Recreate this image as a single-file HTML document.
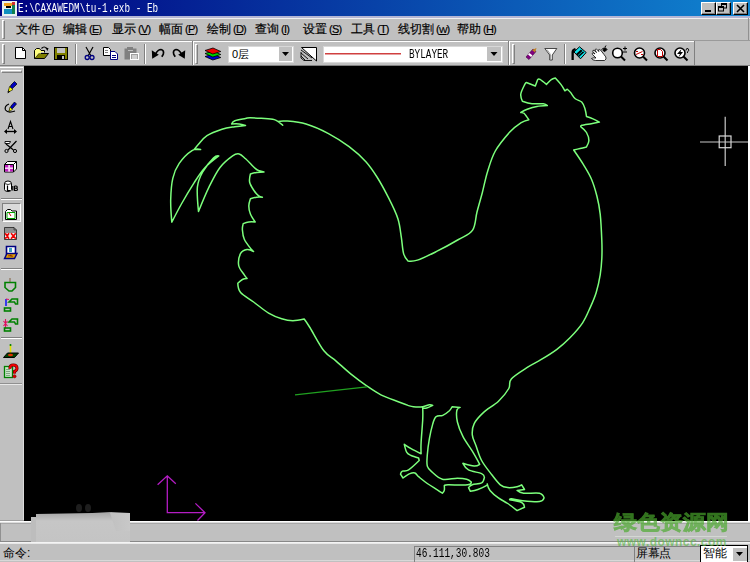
<!DOCTYPE html>
<html><head><meta charset="utf-8">
<style>
*{margin:0;padding:0;box-sizing:border-box}
html,body{width:750px;height:562px;overflow:hidden;background:#c0c0c0;font-family:"Liberation Sans",sans-serif;font-size:12px;color:#000}
.a{position:absolute}
#title{left:0;top:0;width:750px;height:16px;background:linear-gradient(to right,#000080,#1084d0)}
#ttext{left:18px;top:3px;color:#fff;font-family:"Liberation Mono",monospace;font-size:12.5px;font-weight:normal;white-space:nowrap;line-height:13px;transform:scaleX(0.747);transform-origin:0 0}
.tb{background:#c0c0c0;border-top:1px solid #fff;border-left:1px solid #fff;border-right:1px solid #000;border-bottom:1px solid #000;box-shadow:inset -1px -1px 0 #808080}
.mi{top:22px;font-size:12px;white-space:nowrap;line-height:14px;-webkit-text-stroke:0.2px #000}
.hl{width:3px;border-left:1px solid #fff;border-right:1px solid #808080;border-top:1px solid #fff;border-bottom:1px solid #808080}
.hh{height:3px;border-left:1px solid #fff;border-right:1px solid #808080;border-top:1px solid #fff;border-bottom:1px solid #808080}
.sep{width:2px;border-left:1px solid #808080;border-right:1px solid #fff}
.hsep{height:2px;border-top:1px solid #808080;border-bottom:1px solid #fff}
.ic{position:absolute}
.k{font-size:11px;letter-spacing:-0.8px;margin-left:2px}
.k u{text-decoration-thickness:1px;text-underline-offset:1px}
#canvas{left:24px;top:66px;width:724px;height:455px;background:#000}
</style></head><body>
<div class="a" id="title"></div>
<svg class="a" style="left:2px;top:1px" width="15" height="15" viewBox="0 0 15 15">
<rect x="0" y="0" width="15" height="15" fill="#e8f0f0"/>
<rect x="2" y="2" width="8" height="3" fill="#f0a020"/>
<rect x="10" y="1" width="3" height="3" fill="#d03030"/>
<rect x="10" y="4" width="3" height="9" fill="#108050"/>
<rect x="4" y="5" width="5" height="2" fill="#000"/>
<rect x="2" y="8" width="8" height="5" fill="#1090c0"/>
</svg>
<div class="a" id="ttext">E:\CAXAWEDM\tu-1.exb - Eb</div>
<div class="a tb" style="left:701px;top:2px;width:15px;height:13px"></div>
<div class="a tb" style="left:716px;top:2px;width:15px;height:13px"></div>
<div class="a tb" style="left:733px;top:2px;width:15px;height:13px"></div>
<svg class="a" style="left:701px;top:2px" width="47" height="13">
<rect x="4" y="8" width="6" height="2" fill="#000"/>
<path d="M20.5 5.5 H25.5 V7 M20.5 4.5 H23" fill="none" stroke="none"/>
<rect x="20.5" y="1.5" width="5" height="4.5" fill="none" stroke="#000" stroke-width="1"/>
<rect x="20" y="1" width="6" height="2" fill="#000"/>
<rect x="17.5" y="4.5" width="5" height="4.5" fill="#c0c0c0" stroke="#000" stroke-width="1"/>
<rect x="17" y="4" width="6" height="2" fill="#000"/>
<rect x="21" y="1" width="0" height="0"/>
<path d="M36 3 L43 10 M43 3 L36 10" stroke="#000" stroke-width="1.6"/>
</svg>

<!-- menu bar -->
<div class="a" style="left:0;top:16px;width:750px;height:2px;background:#b4b6d4"></div>
<div class="a" style="left:0;top:18px;width:750px;height:1px;background:#f0f0f0"></div>
<div class="a" style="left:0;top:40px;width:750px;height:1px;background:#9a9a9a"></div>
<div class="a" style="left:748px;top:18px;width:1px;height:22px;background:#909090"></div>
<div class="a hl" style="left:2px;top:20px;height:19px"></div>
<div class="a mi" style="left:16px">文件<span class="k">(<u>F</u>)</span></div>
<div class="a mi" style="left:63px">编辑<span class="k">(<u>E</u>)</span></div>
<div class="a mi" style="left:112px">显示<span class="k">(<u>V</u>)</span></div>
<div class="a mi" style="left:159px">幅面<span class="k">(<u>P</u>)</span></div>
<div class="a mi" style="left:207px">绘制<span class="k">(<u>D</u>)</span></div>
<div class="a mi" style="left:255px">查询<span class="k">(<u>I</u>)</span></div>
<div class="a mi" style="left:303px">设置<span class="k">(<u>S</u>)</span></div>
<div class="a mi" style="left:351px">工具<span class="k">(<u>T</u>)</span></div>
<div class="a mi" style="left:398px">线切割<span class="k">(<u style="font-size:9px">W</u>)</span></div>
<div class="a mi" style="left:457px">帮助<span class="k">(<u>H</u>)</span></div>


<!-- toolbar row -->
<div class="a" style="left:0;top:41px;width:695px;height:1px;background:#fff"></div>
<div class="a" style="left:0;top:65px;width:750px;height:1px;background:#808080"></div>
<div class="a" style="left:748px;top:66px;width:2px;height:455px;background:#fff"></div>
<div class="a" style="left:192px;top:41px;width:1px;height:24px;background:#808080"></div>
<div class="a" style="left:193px;top:41px;width:1px;height:24px;background:#fff"></div>
<div class="a" style="left:508px;top:41px;width:1px;height:24px;background:#808080"></div>
<div class="a" style="left:509px;top:41px;width:1px;height:24px;background:#fff"></div>
<div class="a" style="left:694px;top:41px;width:1px;height:24px;background:#808080"></div>
<div class="a hl" style="left:2px;top:44px;height:20px"></div>
<div class="a hl" style="left:195px;top:44px;height:20px"></div>
<div class="a hl" style="left:512px;top:44px;height:20px"></div>
<div class="a sep" style="left:75px;top:44px;height:20px"></div>
<div class="a sep" style="left:144px;top:44px;height:20px"></div>
<div class="a sep" style="left:564px;top:44px;height:20px"></div>

<svg class="a" style="left:0;top:41px" width="750" height="24" viewBox="0 41 750 24">
<!-- new -->
<path d="M15.5 47.5 H22.5 L25.5 50.5 V58.5 H15.5 Z" fill="#fff" stroke="#000"/>
<path d="M22.5 47.5 V50.5 H25.5" fill="none" stroke="#000"/>
<!-- open -->
<path d="M34.5 50.5 L36.5 48.5 H39.5 L41 50.5 H44.5 V52.5" fill="#ffff80" stroke="#000"/>
<path d="M34.5 50.5 V58.5 H44.5 L48.5 53.5 H38.5 L34.5 58.5" fill="#808000" stroke="#000"/>
<path d="M34.5 50.5 H41 V53.5 H38.5 L34.5 58.5Z" fill="#ffff80" stroke="none"/>
<path d="M34.5 50.5 V58.5" stroke="#000"/>
<path d="M41.5 48.5 Q44 45.5 47 48.5" fill="none" stroke="#000" stroke-width="1.2"/>
<path d="M45.5 48 L48.5 48 L47.5 51 Z" fill="#000"/>
<!-- save -->
<rect x="54.5" y="47.5" width="13" height="12" fill="#808000" stroke="#000"/>
<rect x="57" y="48" width="8" height="5" fill="#c0c0c0"/>
<rect x="57" y="55" width="8" height="4.5" fill="#000"/>
<rect x="62" y="56" width="2" height="3" fill="#c0c0c0"/>
<!-- cut -->
<path d="M86 47 L91 56 M93 47 L88 56" stroke="#000" stroke-width="1.2"/>
<circle cx="87.2" cy="57.5" r="2" fill="none" stroke="#000080" stroke-width="1.3"/>
<circle cx="92" cy="57.5" r="2" fill="none" stroke="#000080" stroke-width="1.3"/>
<!-- copy -->
<path d="M103.5 47.5 H108.5 L110.5 49.5 V55.5 H103.5Z" fill="#fff" stroke="#000"/>
<path d="M105 50.5 H108 M105 52.5 H108" stroke="#808080"/>
<path d="M110.5 51.5 H115 L117.5 54 V59.5 H110.5Z" fill="#fff" stroke="#000080"/>
<path d="M112 55.5 H116 M112 57.5 H116" stroke="#000080"/>
<!-- paste (disabled) -->
<rect x="124.5" y="48.5" width="12" height="11" fill="#808080"/>
<rect x="127" y="47" width="6" height="3" fill="#808080"/>
<rect x="128" y="50" width="5" height="1" fill="#c0c0c0"/>
<rect x="130.5" y="53.5" width="8" height="6" fill="#a0a0a0" stroke="#fff"/>
<path d="M132 56 H137 M132 58 H137" stroke="#fff"/>
<!-- undo -->
<path d="M155.5 54 Q158 49.5 161 49.5 Q164.5 50.3 163.2 54.5 L161.8 56.8" fill="none" stroke="#000" stroke-width="1.7"/>
<path d="M151.8 50.2 L152.2 58.8 L158.8 54.8 Z" fill="#000"/>
<!-- redo -->
<path d="M181.5 54 Q179 49.5 176 49.5 Q172.5 50.3 173.8 54.5 L175.2 56.8" fill="none" stroke="#000" stroke-width="1.7"/>
<path d="M185.2 50.2 L184.8 58.8 L178.2 54.8 Z" fill="#000"/>
<!-- layers -->
<path d="M205 56.5 L213 54 L220.8 57.5 L212.8 60 Z" fill="#0000d0" stroke="#000" stroke-width=".8"/>
<path d="M205 53.5 L213 51 L220.8 54.5 L212.8 57 Z" fill="#00d000" stroke="#000" stroke-width=".8"/>
<path d="M205 50.5 L213 48 L220.8 51.5 L212.8 54 Z" fill="#f00000" stroke="#000" stroke-width=".8"/>
<!-- layer combo -->
<rect x="228.5" y="46.5" width="65" height="16" fill="#fff" stroke="#d8d8d8"/>
<rect x="279" y="47" width="13" height="14" fill="#c0c0c0"/>
<path d="M282 52 H289 L285.5 56 Z" fill="#000"/>
<!-- line type icon -->
<path d="M301.5 47.5 H316.5 V61 Z" fill="#fff" stroke="#000"/>
<path d="M301 50 L312 58 M301 53 L308 59 M301 56 L305 60 M301 52 V58 L304 60.5 H312" fill="none" stroke="#000" stroke-width=".9"/>
<!-- color combo -->
<rect x="323.5" y="46.5" width="179" height="16" fill="#fff" stroke="#d8d8d8"/>
<rect x="325" y="53" width="76" height="1.5" fill="#d04040"/>
<rect x="487" y="47" width="14" height="14" fill="#c0c0c0"/>
<path d="M490.5 52 H497.5 L494 56 Z" fill="#000"/>
<!-- pencil eraser -->
<path d="M526 57 L533 49 L536 51.5 L529 59.5 Z" fill="#800080" stroke="#400040" stroke-width=".6"/>
<path d="M529.5 53 L532.5 55.5 L531 57 L528 54.5 Z" fill="#fff"/>
<path d="M532 50 L535 52.5 L536.5 48 Z" fill="#c08020"/>
<!-- funnel -->
<path d="M544.8 48.5 H556.8 L552.3 55 V60 H549.7 V55 Z" fill="#fff" stroke="#202020" stroke-width=".8"/>
<path d="M547 49.5 L550.5 54.5 V59.5" fill="none" stroke="#909090" stroke-width=".8"/>
<!-- fill -->
<path d="M571.5 60 V52 Q571.5 49 575 48 L576 49.5 Q573.8 50.5 573.8 53 V60 Z" fill="#000"/>
<path d="M574 52 L579.5 46.8 L586.2 52.5 L580.5 58.8 Z" fill="#10e0e8" stroke="#000" stroke-width="1"/>
<path d="M576 54 L581 49.5 L584.2 52.3 L579 57 Z" fill="#000"/>
<path d="M578 55.5 L583 51" stroke="#10e0e8" stroke-width="0.8"/>
<!-- hand -->
<path d="M595.5 60.5 Q592 60 591.5 58.5 Q593 57.5 596 58 L592.5 54.5 Q591.5 53 593 52.8 L595 54 L592.8 51.5 Q592.5 50 594 50.3 L596.5 52.5 L595 50 Q595 48.8 596.5 49.2 L599 51.5 L598.5 49.8 Q599.5 49 600.5 50 L604 54.5 Q606.5 57 606 59 L604.5 60.5 Z" fill="#fff" stroke="#000" stroke-width=".8"/>
<path d="M603 50.5 L605 47.5 L607 49.5 L605 51.5Z M601.5 49.5 L604 48 M606 45.5 L605 47" fill="#000" stroke="#000" stroke-width="1"/>
<!-- zoom + -->
<circle cx="617.5" cy="53" r="4.8" fill="#fff" stroke="#000" stroke-width="1.6"/>
<path d="M621 56.5 L625 60.5" stroke="#000" stroke-width="2"/>
<path d="M623 48.5 H627 M625 46.5 V50.5 M623 52 H627" stroke="#000" stroke-width="1"/>
<!-- zoom window -->
<circle cx="639.5" cy="53" r="5" fill="#fff" stroke="#000" stroke-width="1.6"/>
<path d="M643 56.5 L647 60.5" stroke="#000" stroke-width="2"/>
<path d="M636 54.5 L642.5 51.5 M636 51.5 H638 M641 54.5 H643" stroke="#c00000" stroke-width="1"/>
<!-- zoom page -->
<circle cx="660" cy="53" r="5" fill="#fff" stroke="#000" stroke-width="1.6"/>
<path d="M663.5 56.5 L667.5 60.5" stroke="#000" stroke-width="2"/>
<path d="M657.5 49.5 H660.5 L662.5 51.5 V56.5 H657.5Z" fill="#fff" stroke="#c00000" stroke-width="1"/>
<!-- zoom dyn -->
<circle cx="680" cy="53" r="5" fill="#fff" stroke="#000" stroke-width="1.6"/>
<path d="M683.5 56.5 L687.5 60.5" stroke="#000" stroke-width="2"/>
<path d="M681.5 49 L677 54 H680 L678 58 L683 52 H680.5Z" fill="#000"/>
<path d="M686 50.5 Q686 48 688 48.5 Q690 50 687.5 52 V53" fill="none" stroke="#000" stroke-width=".9"/>
</svg>
<div class="a" style="left:232px;top:47px;font-size:11px;line-height:14px;letter-spacing:-0.5px">0层</div>
<div class="a" style="left:409px;top:47.5px;font-family:'Liberation Mono',monospace;font-size:12.5px;line-height:15px;white-space:nowrap;transform:scaleX(0.747);transform-origin:0 0">BYLAYER</div>


<div class="a" id="canvas"></div>
<svg class="a" style="left:0;top:0" width="750" height="562" viewBox="0 0 750 562">
<path id="rooster" d="M171.8 222.2 C171.8 222.2 170.5 207.0 170.7 199.7 C170.9 192.4 171.4 184.4 172.8 178.4 C174.2 172.4 176.0 168.0 179.2 163.4 C182.4 158.8 188.4 152.9 192.0 150.6 C195.6 148.3 200.6 149.5 200.6 149.5 C200.6 149.5 194.2 149.5 194.2 149.5 C194.2 149.5 196.4 146.5 198.5 144.2 C200.6 141.9 203.1 138.1 207.0 135.6 C210.9 133.1 217.4 130.7 222.0 129.2 C226.6 127.7 230.9 127.3 234.8 126.7 C238.7 126.1 245.5 125.4 245.5 125.4 C245.5 125.4 241.4 124.2 239.1 123.9 C236.8 123.7 231.6 123.9 231.6 123.9 C231.6 123.9 232.5 121.6 234.8 120.7 C237.1 119.8 243.0 119.0 245.5 118.5 C248.0 118.0 247.4 117.8 250.0 117.8 C252.6 117.8 257.1 118.0 261.2 118.3 C265.2 118.6 270.7 118.4 274.3 119.6 C277.9 120.8 282.7 125.2 282.7 125.2 C282.7 125.2 278.0 121.5 278.0 121.5 C278.0 121.5 281.3 120.6 286.0 121.0 C290.7 121.4 298.9 121.9 306.0 124.0 C313.1 126.1 321.3 129.8 328.5 133.6 C335.7 137.4 342.9 142.0 349.1 146.7 C355.3 151.4 361.2 156.6 365.9 161.7 C370.5 166.8 373.2 171.0 377.0 177.0 C380.8 183.0 385.1 191.0 388.6 197.9 C392.1 204.8 395.8 212.1 397.9 218.7 C400.0 225.2 400.4 231.4 401.3 237.2 C402.2 243.0 402.5 249.6 403.6 253.6 C404.7 257.6 408.0 261.0 408.0 261.0 C408.0 261.0 412.7 261.7 417.4 260.1 C422.1 258.6 429.2 255.1 436.1 251.7 C443.0 248.3 452.4 243.1 458.5 239.5 C464.6 235.9 469.5 234.7 472.6 230.1 C475.7 225.5 475.4 218.2 477.0 212.0 C478.6 205.8 480.5 199.5 482.3 192.7 C484.1 185.9 485.4 178.3 487.6 171.4 C489.8 164.5 491.6 157.6 495.3 151.0 C499.0 144.4 505.6 136.7 509.8 132.0 C514.0 127.3 517.6 125.0 520.8 122.9 C524.0 120.9 528.8 119.7 528.8 119.7 C528.8 119.7 525.3 114.5 524.0 113.3 C522.7 112.1 520.8 112.5 520.8 112.5 C520.8 112.5 524.5 110.3 527.2 109.3 C529.9 108.3 533.5 107.1 536.9 106.5 C540.2 105.9 547.3 105.6 547.3 105.6 C547.3 105.6 545.8 104.0 543.3 103.7 C540.8 103.4 535.5 104.1 532.0 103.7 C528.5 103.3 522.4 101.2 522.4 101.2 C522.4 101.2 520.4 96.8 520.8 94.0 C521.2 91.2 523.9 86.3 524.8 84.4 C525.7 82.5 526.4 82.5 526.4 82.5 C526.4 82.5 535.3 86.0 535.3 86.0 C535.3 86.0 537.7 79.6 537.7 79.6 C537.7 79.6 538.5 78.5 540.0 79.3 C541.5 80.1 546.5 84.4 546.5 84.4 C546.5 84.4 547.2 83.6 548.0 82.8 C548.8 82.0 550.1 80.4 551.3 79.6 C552.5 78.8 555.3 78.0 555.3 78.0 C555.3 78.0 559.3 82.3 560.9 84.4 C562.5 86.5 564.9 90.8 564.9 90.8 C564.9 90.8 567.3 89.2 567.3 89.2 C567.3 89.2 569.2 90.8 570.5 92.4 C571.8 94.0 573.4 97.2 575.3 98.8 C577.2 100.4 580.1 100.4 581.7 102.0 C583.3 103.6 584.1 106.1 584.9 108.5 C585.7 110.9 586.5 116.5 586.5 116.5 C586.5 116.5 590.9 118.0 593.0 118.9 C595.1 119.8 599.4 122.1 599.4 122.1 C599.4 122.1 594.2 123.2 591.3 123.7 C588.3 124.2 583.4 124.8 581.7 125.3 C580.0 125.8 580.9 126.9 580.9 126.9 C580.9 126.9 585.2 130.2 586.5 132.5 C587.8 134.8 588.9 138.1 588.9 140.5 C588.9 142.9 586.5 146.9 586.5 146.9 C586.5 146.9 582.2 148.0 580.1 148.5 C578.0 149.0 573.7 150.0 573.7 150.0 C573.7 150.0 580.4 159.6 583.3 164.4 C586.2 169.2 589.0 173.5 591.3 178.8 C593.6 184.2 595.5 190.6 597.0 196.5 C598.5 202.4 599.4 206.8 600.2 214.1 C601.0 221.3 601.5 232.6 601.8 240.0 C602.1 247.4 602.1 253.0 601.8 258.8 C601.5 264.6 601.1 269.3 600.2 274.9 C599.3 280.5 597.8 287.2 596.2 292.5 C594.6 297.8 592.8 301.8 590.5 306.9 C588.2 311.9 586.1 317.6 582.6 322.8 C579.1 328.0 574.0 333.6 569.7 338.0 C565.4 342.4 561.7 345.7 556.9 349.3 C552.1 352.9 545.7 356.8 540.9 359.7 C536.1 362.6 533.0 363.7 528.1 366.9 C523.2 370.1 514.5 375.3 511.3 378.9 C508.1 382.5 510.9 384.8 508.8 388.5 C506.7 392.2 502.7 397.2 498.5 401.2 C494.3 405.2 487.7 408.7 483.6 412.4 C479.6 416.1 476.1 419.9 474.2 423.6 C472.3 427.4 472.0 431.1 472.3 434.9 C472.6 438.6 474.6 441.8 476.1 446.1 C477.7 450.4 479.1 455.9 481.6 460.5 C484.1 465.1 487.8 469.6 490.9 473.6 C494.0 477.7 497.5 482.5 500.3 484.8 C503.1 487.1 504.9 487.3 507.7 487.6 C510.5 487.9 514.8 487.2 517.1 486.7 C519.4 486.2 521.7 484.8 521.7 484.8 C521.7 484.8 524.5 489.5 524.5 489.5 C524.5 489.5 517.1 490.4 517.1 490.4 C517.1 490.4 519.9 492.7 523.6 493.2 C527.3 493.7 536.1 492.4 539.5 493.2 C542.9 494.0 544.1 497.9 544.1 497.9 C544.1 497.9 543.1 501.1 539.5 501.6 C535.9 502.1 527.4 501.2 522.7 500.7 C518.0 500.2 513.7 499.0 511.5 498.8 C509.3 498.6 509.6 499.7 509.6 499.7 C509.6 499.7 519.2 501.2 521.7 502.5 C524.2 503.8 524.5 507.2 524.5 507.2 C524.5 507.2 517.1 510.6 517.1 510.6 C517.1 510.6 510.8 505.6 507.7 503.5 C504.6 501.4 501.3 500.1 498.4 497.9 C495.4 495.7 491.9 492.7 490.0 490.4 C488.1 488.1 487.2 483.9 487.2 483.9 C487.2 483.9 487.9 484.8 486.3 485.7 C484.8 486.6 480.5 488.6 477.9 489.5 C475.2 490.4 470.4 491.3 470.4 491.3 C470.4 491.3 468.5 487.6 468.5 487.6 C468.5 487.6 470.1 485.6 472.3 484.8 C474.5 484.0 479.6 484.1 481.6 482.9 C483.6 481.6 484.4 477.3 484.4 477.3 C484.4 477.3 484.2 474.8 481.6 473.6 C479.0 472.4 471.6 471.6 468.5 469.9 C465.4 468.2 462.9 463.3 462.9 463.3 C462.9 463.3 471.3 465.9 474.1 466.1 C476.9 466.3 479.7 464.3 479.7 464.3 C479.7 464.3 475.1 455.8 472.3 451.2 C469.5 446.6 465.5 441.6 463.0 436.7 C460.5 431.8 458.4 426.3 457.4 422.0 C456.4 417.7 456.4 413.1 456.8 410.7 C457.2 408.3 460.1 407.4 460.1 407.4 C460.1 407.4 452.1 406.7 452.1 406.7 C452.1 406.7 450.9 409.2 449.4 410.7 C447.8 412.1 445.0 414.4 442.8 415.4 C440.6 416.4 437.8 415.2 436.1 416.7 C434.4 418.1 433.8 420.4 432.7 424.1 C431.6 427.8 430.3 433.6 429.4 438.7 C428.5 443.8 427.6 450.3 427.3 454.9 C427.0 459.5 426.5 463.2 427.3 466.1 C428.1 469.0 429.8 470.1 432.3 472.3 C434.8 474.5 438.1 478.2 442.3 479.2 C446.5 480.2 453.2 478.3 457.3 478.3 C461.4 478.3 464.4 478.6 466.7 479.2 C469.0 479.8 471.3 482.0 471.3 482.0 C471.3 482.0 471.5 484.3 467.6 484.8 C463.7 485.3 451.9 484.7 448.0 484.8 C444.1 484.9 444.3 485.7 444.3 485.7 C444.3 485.7 444.6 489.1 444.3 490.4 C444.0 491.6 442.4 493.2 442.4 493.2 C442.4 493.2 439.8 491.4 437.3 489.8 C434.8 488.2 430.4 485.7 427.3 483.5 C424.2 481.3 420.7 478.4 418.6 476.7 C416.5 474.9 416.3 473.5 414.9 473.0 C413.4 472.5 411.9 472.8 409.9 473.6 C407.9 474.4 403.0 478.0 403.0 478.0 C403.0 478.0 400.5 474.2 400.5 474.2 C400.5 474.2 401.0 471.8 402.4 471.1 C403.8 470.4 405.8 471.7 408.6 469.9 C411.4 468.1 419.2 460.5 419.2 460.5 C419.2 460.5 418.6 458.0 418.6 458.0 C418.6 458.0 413.1 456.4 411.1 455.5 C409.1 454.6 407.9 454.3 406.8 452.4 C405.7 450.5 404.3 444.3 404.3 444.3 C404.3 444.3 408.3 447.1 411.1 448.7 C413.9 450.3 421.1 453.7 421.1 453.7 C421.1 453.7 420.8 448.1 421.1 442.5 C421.4 436.9 422.4 425.8 422.7 420.0 C423.0 414.2 422.7 408.0 422.7 408.0 C422.7 408.0 425.0 408.4 426.7 408.0 C428.4 407.6 432.7 405.4 432.7 405.4 C432.7 405.4 431.1 404.5 429.4 404.7 C427.7 404.9 425.4 406.4 422.7 406.7 C420.0 407.0 415.8 406.9 413.4 406.7 C410.9 406.5 410.3 406.1 408.0 405.4 C405.7 404.6 404.1 404.0 399.6 402.2 C395.1 400.4 386.5 397.6 380.9 394.8 C375.3 392.0 371.0 388.8 366.0 385.4 C361.0 382.0 356.0 378.2 351.0 374.2 C346.0 370.1 340.6 365.0 336.1 361.1 C331.6 357.2 328.3 356.4 323.9 350.8 C319.5 345.2 313.2 332.8 309.9 327.5 C306.6 322.2 304.2 319.0 304.2 319.0 C304.2 319.0 296.6 320.7 292.9 320.7 C289.1 320.7 285.8 320.1 281.7 318.8 C277.6 317.6 273.3 316.0 268.6 313.2 C263.9 310.4 258.3 305.4 253.6 302.0 C248.9 298.6 243.2 295.7 240.6 292.6 C238.0 289.5 237.8 283.3 237.8 283.3 C237.8 283.3 240.9 280.3 242.4 279.5 C243.9 278.7 247.1 278.6 247.1 278.6 C247.1 278.6 245.7 277.1 244.3 274.9 C242.9 272.7 239.3 269.1 238.7 265.5 C238.1 261.9 239.2 256.1 240.6 253.4 C242.0 250.8 244.9 249.9 247.1 249.6 C249.3 249.3 253.6 251.5 253.6 251.5 C253.6 251.5 252.4 250.7 250.8 248.7 C249.2 246.7 245.7 242.4 244.3 239.3 C242.9 236.2 242.6 232.6 242.4 230.0 C242.2 227.4 243.2 223.6 243.2 223.6 C243.2 223.6 246.8 222.3 248.8 222.0 C250.8 221.7 255.2 222.0 255.2 222.0 C255.2 222.0 251.5 216.7 250.4 214.0 C249.3 211.3 248.8 208.5 248.8 206.0 C248.8 203.5 250.4 198.8 250.4 198.8 C250.4 198.8 254.8 197.5 256.8 197.2 C258.8 196.9 262.4 197.2 262.4 197.2 C262.4 197.2 259.9 196.8 258.4 195.6 C256.9 194.4 255.1 192.3 253.6 190.0 C252.1 187.7 250.1 184.7 249.6 182.0 C249.1 179.3 250.4 174.0 250.4 174.0 C250.4 174.0 254.5 172.7 256.8 172.4 C259.1 172.1 264.0 172.1 264.0 172.1 C264.0 172.1 260.7 171.4 259.2 170.8 C257.7 170.2 257.5 170.4 255.2 168.4 C252.9 166.4 248.3 161.2 245.6 158.8 C242.9 156.4 241.4 154.5 239.2 154.0 C237.0 153.5 235.8 153.6 232.6 155.9 C229.4 158.2 223.7 162.5 219.8 167.7 C215.9 172.9 212.7 179.6 209.1 186.9 C205.5 194.2 198.5 211.5 198.5 211.5 C198.5 211.5 196.7 193.5 197.4 186.9 C198.1 180.3 200.0 176.8 202.7 172.0 C205.4 167.2 210.7 160.8 213.4 158.1 C216.1 155.4 218.8 155.9 218.8 155.9 C218.8 155.9 209.0 163.2 204.9 167.7 C200.8 172.1 198.1 176.5 194.2 182.6 C190.3 188.7 185.1 197.4 181.4 204.0 C177.7 210.6 171.8 222.2 171.8 222.2Z" fill="none" stroke="#7cff7c" stroke-width="1.5" stroke-linejoin="round"/>
<path d="M295 394.8 L366.9 386.9" stroke="#20a020" stroke-width="1.3"/>
<path d="M725.2 116.8 V166 M700 142 H748" stroke="#c8c8c8" stroke-width="1.2"/>
<rect x="719.2" y="136" width="11.8" height="11.7" fill="none" stroke="#d8d8d8" stroke-width="1.2"/>
<path d="M167.3 475.8 V512.7 H205 M157.6 484.7 L167.3 475.8 L175.8 483.8 M195.4 503.4 L205 512.7 L197.5 520.5" fill="none" stroke="#b41cc4" stroke-width="1.3"/>
</svg>

<!-- left toolbar -->
<div class="a" style="left:0;top:67px;width:23px;height:1px;background:#fff"></div>
<div class="a" style="left:23px;top:67px;width:1px;height:454px;background:#dcdcdc"></div>
<div class="a hh" style="left:1px;top:70px;width:21px"></div>
<div class="a hsep" style="left:1px;top:198px;width:21px"></div>
<div class="a hsep" style="left:1px;top:268px;width:21px"></div>
<div class="a hsep" style="left:1px;top:337px;width:21px"></div>
<div class="a" style="left:0;top:383px;width:22px;height:1px;background:#909090"></div>
<div class="a" style="left:0;top:384px;width:22px;height:1px;background:#e8e8e8"></div>
<div class="a" style="left:2px;top:203px;width:19px;height:19px;background:#dadada;border-top:1px solid #808080;border-left:1px solid #808080;border-right:1px solid #fff;border-bottom:1px solid #fff"></div>
<svg class="a" style="left:0;top:66px" width="24" height="455" viewBox="0 66 24 455">
<!-- pencil -->
<path d="M8 92 L11 85 L14.5 81.5 L17 84 L13.5 87.5 Z" fill="#0000c0" stroke="#000" stroke-width=".7"/>
<path d="M8 92.5 L9.5 86.5 L13 89.5 Z" fill="#ffff00" stroke="#000" stroke-width=".6"/>
<path d="M7.5 93.5 L8.8 90.5 L10 91.5 Z" fill="#000"/>
<!-- arc pencil -->
<path d="M9 104 Q4 106 5.5 110 Q8 113.5 15 111" fill="none" stroke="#000" stroke-width="1.2"/>
<path d="M9 111 L11 106 L14.5 102 L16.5 104 L13 108 Z" fill="#0000c0" stroke="#000" stroke-width=".7"/>
<path d="M9 111.5 L10 107 L12.5 109.5 Z" fill="#ffff00" stroke="#000" stroke-width=".5"/>
<!-- text A arrows -->
<path d="M8 129 L10.5 121.5 L13 129 M9 126.5 H12" fill="none" stroke="#000" stroke-width="1.1"/>
<path d="M5 131.5 H16" stroke="#000" stroke-width="1.3"/>
<path d="M4 131.5 L7 129 V134 Z M17 131.5 L14 129 V134 Z" fill="#000"/>
<!-- scissors -->
<path d="M5 141.5 H10.5 L9.5 143.5 H5 Z" fill="#fff" stroke="#000" stroke-width=".9"/>
<path d="M6 144 L13.5 150 M16.5 141 L8 150" stroke="#000" stroke-width="1.2"/>
<circle cx="6.5" cy="151" r="1.6" fill="none" stroke="#000" stroke-width="1"/>
<circle cx="15" cy="151" r="1.6" fill="none" stroke="#000" stroke-width="1"/>
<!-- block -->
<path d="M4.5 164.5 L7.5 161.5 H16.5 V169 L13.5 172 H4.5 Z" fill="#fff" stroke="#000" stroke-width="1"/>
<rect x="5" y="165" width="8" height="6.5" fill="#c020c0"/>
<rect x="8.2" y="165" width="1.8" height="6.5" fill="#f8d0f8"/>
<rect x="5" y="167.4" width="8" height="1.6" fill="#f8d0f8"/>
<path d="M4.5 164.5 H13.5 V172 M13.5 164.5 L16.5 161.5" fill="none" stroke="#000" stroke-width="1"/>
<!-- lib -->
<path d="M4.5 183.5 Q4.5 181 8 181 Q11.5 181 11.5 183.5 V189.5 Q11.5 191.5 8 191.5 Q4.5 191.5 4.5 189.5 Z" fill="#fff" stroke="#000" stroke-width="1"/>
<path d="M4.5 183.5 Q8 185.5 11.5 183.5" fill="none" stroke="#000" stroke-width=".8"/>
<path d="M7.5 185.5 V190.5 H10 M12.8 186 V190.5" stroke="#000" stroke-width="1.2" fill="none"/>
<path d="M14.5 186 H16 Q17.3 186 17.3 187.2 Q17.3 188.2 16 188.2 H14.5 M16 188.2 Q17.5 188.2 17.5 189.4 Q17.5 190.5 16 190.5 H14.5 V186" stroke="#000" stroke-width="1.1" fill="none"/>
<!-- folder green -->
<path d="M5.5 211.5 L7.5 209.5 H10.5 L12 211 H16.5 V219.5 H5.5 Z" fill="#fff" stroke="#000" stroke-width="1"/>
<path d="M7 212.5 H15 V218.5 H7 Z" fill="none" stroke="#00a000" stroke-width="1"/>
<path d="M9 213 L11 216" stroke="#c00000" stroke-width="1"/>
<!-- ncp -->
<path d="M4.5 227.5 H14 L16.5 230 V239.5 H4.5 Z" fill="#909090" stroke="#202020" stroke-width=".8"/>
<path d="M14 227.5 V230 H16.5" fill="none" stroke="#202020" stroke-width=".6"/>
<rect x="5" y="233" width="11" height="6" fill="#f0f0f0"/>
<path d="M5.2 233.2 L9 238.8 M9 233.2 L5.2 238.8 M11 233.2 L15.8 238.8 M15.8 233.2 L11 238.8" stroke="#f00000" stroke-width="1.7"/>
<!-- blue computer -->
<path d="M6.5 246.5 H15.5 V254 H6.5 Z" fill="#fff" stroke="#000080" stroke-width="1.6"/>
<rect x="9" y="248" width="3" height="4" fill="#40a0c0"/>
<path d="M4.5 258.5 L7 253.5 H17 L14.5 258.5 Z" fill="#e0a000" stroke="#000080" stroke-width="1.4"/>
<path d="M8 256 L11 255 L13 256.5" stroke="#c04000" stroke-width="1"/>
<!-- shape1 -->
<path d="M10 278 V282" stroke="#806040" stroke-width="1"/>
<path d="M5 282.5 H15.5 V287.5 L12 291 H9 L5 287.5 Z" fill="none" stroke="#008000" stroke-width="1.6"/>
<!-- shape2 -->
<path d="M6 299 V306" stroke="#0000ff" stroke-width="1.4"/>
<path d="M6 299 L9 299.5" stroke="#e01060" stroke-width="1"/>
<path d="M9 302 L12 299 H17.5 V304 H15.5 L14.5 302 Z" fill="none" stroke="#008000" stroke-width="1.6"/>
<rect x="4.5" y="308" width="6" height="3" fill="none" stroke="#008000" stroke-width="1.6"/>
<!-- shape3 -->
<path d="M3.5 321 L7.5 326 M7.5 321 L3.5 326 M5.5 319 V328" stroke="#e01060" stroke-width="1.1"/>
<path d="M9 322 L12 319 H17.5 V324 H15.5 L14.5 322 Z" fill="none" stroke="#008000" stroke-width="1.6"/>
<rect x="4.5" y="328" width="6" height="3" fill="none" stroke="#008000" stroke-width="1.6"/>
<!-- joystick -->
<path d="M10.5 345 V353" stroke="#e0e000" stroke-width="1.6"/>
<circle cx="10.5" cy="345" r="1" fill="#008000"/>
<path d="M3.5 357.5 L7.5 353 H18.5 L14.5 357.5 Z" fill="#004000" stroke="#000" stroke-width="1"/>
<ellipse cx="10.5" cy="355" rx="2.5" ry="1.3" fill="#e03000"/>
<!-- help -->
<rect x="4.5" y="366.5" width="8" height="11" fill="#c8e8c8" stroke="#008000" stroke-width="1.3"/>
<path d="M6 369.5 H10 M6 371.5 H10 M6 373.5 H10 M6 375.5 H10" stroke="#709070" stroke-width=".8"/>
<path d="M9.8 368.8 Q9.8 365 13.3 365 Q17 365 17 368.3 Q17 370.5 14.5 371.5 V373.5" fill="none" stroke="#600000" stroke-width="3"/>
<path d="M9.8 368.8 Q9.8 365 13.3 365 Q17 365 17 368.3 Q17 370.5 14.5 371.5 V373.5" fill="none" stroke="#f00000" stroke-width="1.8"/>
<circle cx="14.5" cy="376.3" r="1.6" fill="#e00000" stroke="#600000" stroke-width=".5"/>
</svg>


<!-- bottom -->
<div class="a" style="left:0;top:520px;width:24px;height:1px;background:#a0a0a0"></div>
<div class="a" style="left:0;top:521px;width:750px;height:1px;background:#fcfcfc"></div>
<div class="a" style="left:0;top:522px;width:750px;height:1px;background:#dcdcdc"></div>
<div class="a" style="left:0;top:523px;width:750px;height:1px;background:#a8a8a8"></div>
<div class="a" style="left:0;top:523px;width:1px;height:19px;background:#909090"></div>
<div class="a" style="left:0;top:541px;width:750px;height:1px;background:#888"></div>
<div class="a" style="left:0;top:542px;width:750px;height:1px;background:#f4f4f4"></div>
<div class="a" style="left:0;top:543px;width:750px;height:1px;background:#e8e8e8"></div>
<div class="a" style="left:0;top:560px;width:750px;height:1px;background:#d8d8d8"></div>
<div class="a" style="left:3px;top:547px;font-size:12px;line-height:13px">命令:</div>
<div class="a" style="left:414px;top:546px;width:220px;height:16px;border-top:1px solid #808080;border-left:1px solid #808080"></div>
<div class="a" style="left:416px;top:547px;font-family:'Liberation Mono',monospace;font-size:12.5px;line-height:15px;white-space:nowrap;transform:scaleX(0.757);transform-origin:0 0">46.111,30.803</div>
<div class="a" style="left:634px;top:546px;width:66px;height:16px;border-top:1px solid #808080;border-left:1px solid #808080"></div>
<div class="a" style="left:636px;top:547px;font-size:12px;line-height:13px;letter-spacing:-0.5px">屏幕点</div>
<div class="a" style="left:700px;top:545px;width:48px;height:17px;background:#fff;border-top:1px solid #000;border-left:1px solid #000;border-right:1px solid #000"></div>
<div class="a" style="left:703px;top:547px;font-size:12px;line-height:13px">智能</div>
<div class="a" style="left:732px;top:547px;width:15px;height:14px;background:#c0c0c0;border-top:1px solid #fff;border-left:1px solid #fff"></div>
<svg class="a" style="left:732px;top:547px" width="15" height="14"><path d="M4 5 H11 L7.5 9 Z" fill="#000"/></svg>
<!-- smudge -->
<div class="a" style="left:31px;top:517px;width:6px;height:25px;background:#bdbdbd"></div>
<div class="a" style="left:36px;top:512px;width:94px;height:30px;background:linear-gradient(to bottom,#a4a4a4 0px,#b6b6b6 5px,#c6c6c6 9px,#c4c4c4 100%);clip-path:polygon(0 2px,60% 1px,80% 0,100% 1px,100% 100%,0 100%)"></div>
<div class="a" style="left:110px;top:513px;width:20px;height:18px;background:linear-gradient(to right,#c0c0c0,#c8c8c8);clip-path:polygon(0 0,100% 0,100% 100%,30% 100%)"></div>
<div class="a" style="left:76px;top:504px;width:6px;height:8px;border-radius:50%;background:#1e1e1e;filter:blur(.6px)"></div>
<div class="a" style="left:85px;top:504px;width:6px;height:8px;border-radius:50%;background:#1e1e1e;filter:blur(.6px)"></div>
<!-- watermark -->
<div class="a" style="left:614px;top:509px;font-size:23px;line-height:26px;color:rgb(75,170,45);opacity:0.68;-webkit-text-stroke:0.9px rgb(75,170,45);font-weight:bold;white-space:nowrap;transform:scaleY(0.88);transform-origin:0 50%">绿色资源网</div>
<div class="a" style="left:615px;top:536px;width:112px;height:1px;background:rgba(230,240,230,0.5)"></div>
<div class="a" style="left:617px;top:535px;font-size:12px;font-weight:bold;line-height:15px;color:rgba(90,185,70,0.65);white-space:nowrap;letter-spacing:0.45px">www.downcc.com</div>
</body></html>
